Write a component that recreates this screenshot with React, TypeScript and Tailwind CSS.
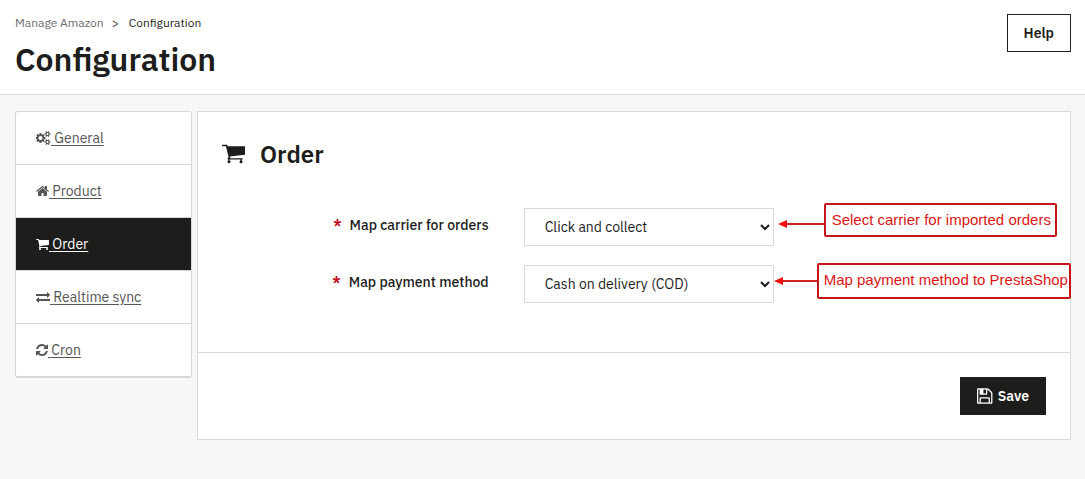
import { useState } from 'react'

type IconName = 'cogs' | 'home' | 'cart' | 'exchange' | 'refresh' | 'floppy'

const icons: Record<IconName, { viewBox: string; d: string }> = {
  cogs: {
    viewBox: '0 0 1920 1792',
    d: 'M832 896q0-106-75-181t-181-75-181 75-75 181 75 181 181 75 181-75 75-181zm768 512q0-52-38-90t-90-38-90 38-38 90q0 53 37.5 90.5t90.5 37.5 90.5-37.5 37.5-90.5zm0-1024q0-52-38-90t-90-38-90 38-38 90q0 53 37.5 90.5t90.5 37.5 90.5-37.5 37.5-90.5zm-384 421v185q0 10-7 19.5t-16 10.5l-155 24q-11 35-32 76 34 48 90 115 7 11 7 20 0 12-7 19-23 30-82.5 89.5t-78.5 59.5q-11 0-21-7l-115-90q-37 19-77 31-11 108-23 155-7 24-30 24h-186q-11 0-20-7.5t-10-17.5l-23-153q-34-10-75-31l-118 89q-7 7-20 7-11 0-21-8-144-133-144-160 0-9 7-19 10-14 41-53t47-61q-23-44-35-82l-152-24q-10-1-17-9.5t-7-19.5v-185q0-10 7-19.5t16-10.5l155-24q11-35 32-76-34-48-90-115-7-11-7-20 0-12 7-20 22-30 82-89t79-59q11 0 21 7l115 90q34-18 77-32 11-108 23-154 7-24 30-24h186q11 0 20 7.5t10 17.5l23 153q34 10 75 31l118-89q8-7 20-7 11 0 21 8 144 133 144 160 0 8-7 19-12 16-42 54t-45 60q23 48 34 82l152 23q10 2 17 10.5t7 19.5zm640 533v140q0 16-149 31-12 27-30 52 51 113 51 138 0 4-4 7-122 71-124 71-8 0-46-47t-52-68q-20 2-30 2t-30-2q-14 21-52 68t-46 47q-2 0-124-71-4-3-4-7 0-25 51-138-18-25-30-52-149-15-149-31v-140q0-16 149-31 13-29 30-52-51-113-51-138 0-4 4-7 4-2 35-20t59-34 30-16q8 0 46 46.5t52 67.5q20-2 30-2t30 2q51-71 92-112l6-2q4 0 124 70 4 3 4 7 0 25-51 138 17 23 30 52 149 15 149 31zm0-1024v140q0 16-149 31-12 27-30 52 51 113 51 138 0 4-4 7-122 71-124 71-8 0-46-47t-52-68q-20 2-30 2t-30-2q-14 21-52 68t-46 47q-2 0-124-71-4-3-4-7 0-25 51-138-18-25-30-52-149-15-149-31v-140q0-16 149-31 13-29 30-52-51-113-51-138 0-4 4-7 4-2 35-20t59-34 30-16q8 0 46 46.5t52 67.5q20-2 30-2t30 2q51-71 92-112l6-2q4 0 124 70 4 3 4 7 0 25-51 138 17 23 30 52 149 15 149 31z',
  },
  home: {
    viewBox: '64 0 1664 1792',
    d: 'M1472 992v480q0 26-19 45t-45 19h-384v-384h-256v384h-384q-26 0-45-19t-19-45v-480q0-1 .5-3t.5-3l575-474 575 474q1 2 1 6zm223-69l-62 74q-8 9-21 11h-3q-13 0-21-7l-692-577-692 577q-12 8-24 7-13-2-21-11l-62-74q-8-10-7-23.5t11-21.5l719-599q32-26 76-26t76 26l244 204v-195q0-14 9-23t23-9h192q14 0 23 9t9 23v408l219 182q10 8 11 21.5t-7 23.5z',
  },
  cart: {
    viewBox: '64 0 1664 1792',
    d: 'M704 1536q0 52-38 90t-90 38-90-38-38-90 38-90 90-38 90 38 38 90zm896 0q0 52-38 90t-90 38-90-38-38-90 38-90 90-38 90 38 38 90zm128-1088v512q0 24-16.5 42.5t-40.5 21.5l-1044 122q13 60 13 70 0 16-24 64h920q26 0 45 19t19 45-19 45-45 19h-1024q-26 0-45-19t-19-45q0-11 8-31.5t16-36 21.5-40 15.5-29.5l-177-823h-204q-26 0-45-19t-19-45 19-45 45-19h256q16 0 28.5 6.5t19.5 15.5 13 24.5 8 26 5.5 29.5 4.5 26h1201q26 0 45 19t19 45z',
  },
  exchange: {
    viewBox: '0 0 1792 1792',
    d: 'M1792 1184v192q0 13-9.5 22.5t-22.5 9.5h-1376v192q0 13-9.5 22.5t-22.5 9.5q-12 0-24-10l-319-320q-9-9-9-22 0-14 9-23l320-320q9-9 23-9 13 0 22.5 9.5t9.5 22.5v192h1376q13 0 22.5 9.5t9.5 22.5zm0-544q0 14-9 23l-320 320q-9 9-23 9-13 0-22.5-9.5t-9.5-22.5v-192h-1376q-13 0-22.5-9.5t-9.5-22.5v-192q0-13 9.5-22.5t22.5-9.5h1376v-192q0-14 9-23t23-9q12 0 24 10l319 319q9 9 9 23z',
  },
  refresh: {
    viewBox: '128 0 1536 1792',
    d: 'M1639 1056q0 5-1 7-64 268-268 434.5t-478 166.5q-146 0-282.5-55t-243.5-157l-129 129q-19 19-45 19t-45-19-19-45v-448q0-26 19-45t45-19h448q26 0 45 19t19 45-19 45l-137 137q71 66 161 102t187 36q134 0 250-65t186-179q11-17 53-117 8-23 30-23h192q13 0 22.5 9.5t9.5 22.5zm25-800v448q0 26-19 45t-45 19h-448q-26 0-45-19t-19-45 19-45l138-138q-148-137-349-137-134 0-250 65t-186 179q-11 17-53 117-8 23-30 23h-199q-13 0-22.5-9.5t-9.5-22.5v-7q65-268 270-434.5t480-166.5q146 0 284 55.5t245 156.5l130-129q19-19 45-19t45 19 19 45z',
  },
  floppy: {
    viewBox: '128 0 1536 1792',
    d: 'M512 1536h768v-384h-768v384zm896 0h128v-896q0-14-10-38.5t-20-34.5l-281-281q-10-10-34-20t-39-10v416q0 40-28 68t-68 28h-576q-40 0-68-28t-28-68v-416h-128v1280h128v-416q0-40 28-68t68-28h832q40 0 68 28t28 68v416zm-384-928v-320q0-13-9.5-22.5t-22.5-9.5h-192q-13 0-22.5 9.5t-9.5 22.5v320q0 13 9.5 22.5t22.5 9.5h192q13 0 22.5-9.5t9.5-22.5zm640 32v928q0 40-28 68t-68 28h-1344q-40 0-68-28t-28-68v-1344q0-40 28-68t68-28h928q40 0 88 20t76 48l280 280q28 28 48 76t20 88z',
  },
}

function Icon({ name, className }: { name: IconName; className: string }) {
  return (
    <svg viewBox={icons[name].viewBox} className={className} fill="currentColor" aria-hidden="true">
      <path d={icons[name].d} />
    </svg>
  )
}

const tabs: { id: string; label: string; icon: IconName }[] = [
  { id: 'general', label: 'General', icon: 'cogs' },
  { id: 'product', label: 'Product', icon: 'home' },
  { id: 'order', label: 'Order', icon: 'cart' },
  { id: 'sync', label: 'Realtime sync', icon: 'exchange' },
  { id: 'cron', label: 'Cron', icon: 'refresh' },
]

function HeadingCart() {
  return (
    <svg viewBox="0 0 23 20" className="h-5 w-[23px]" fill="currentColor" aria-hidden="true">
      <path d="M0 .8h5.2l.5 1.4H23v8.6L8 12.6l.4 1.7h12.2v1.3H5.6v-1.2l1-1.4L3.9 2.2H0z" />
      <circle cx="7" cy="17.8" r="1.5" />
      <circle cx="19" cy="17.8" r="1.5" />
      <path d="M6.4 15h1.2v2H6.4zM18.4 15h1.2v2h-1.2z" />
    </svg>
  )
}

function Arrow({ className }: { className: string }) {
  return (
    <svg viewBox="0 0 46 8" preserveAspectRatio="xMinYMid slice" className={className} aria-hidden="true">
      <path d="M7 4H46" stroke="#c9241f" strokeWidth="2" />
      <path d="M0 4L9 0V8Z" fill="#f50f0f" />
    </svg>
  )
}

export default function App() {
  const [active, setActive] = useState('order')
  const [carrier, setCarrier] = useState('click')
  const [payment, setPayment] = useState('cod')

  return (
    <div className="min-h-screen bg-[#f7f7f7] font-['IBM_Plex_Sans','Roboto',sans-serif] text-sm text-[#1d1d1b]">
      {/* Page header */}
      <header className="flex items-start justify-between border-b border-[#dadcdc] bg-white pt-[14px] pr-[14px] pb-[15px] pl-[15px]">
        <div>
          <nav aria-label="Breadcrumb" className="flex text-xs leading-[18px]">
            <a href="#" className="text-[#6c6c6c]">Manage Amazon</a>
            <span className="px-2">&gt;</span>
            <span className="pl-[2px]">Configuration</span>
          </nav>
          <h1 className="mt-[7px] text-[32px] leading-10 font-semibold">Configuration</h1>
        </div>
        <button type="button" className="h-[38px] border border-[#1d1d1b] bg-white px-4 font-semibold">
          Help
        </button>
      </header>

      <main className="flex items-start gap-[5px] pt-4 pr-[14px] pl-[15px]">
        {/* Tabs */}
        <nav className="w-[177px] shrink-0 overflow-hidden rounded-[3px] border border-b-2 border-[#d3d8db] bg-white">
          <ul className="divide-y divide-[#d3d8db]">
            {tabs.map((tab) => (
              <li key={tab.id}>
                <a
                  href={`#${tab.id}`}
                  onClick={() => setActive(tab.id)}
                  className={`block px-5 py-4 leading-5 underline underline-offset-2 ${
                    active === tab.id ? 'bg-[#1d1d1b] text-white' : 'text-[#555]'
                  }`}
                >
                  <Icon name={tab.icon} className="inline-block h-[14px] w-auto align-[-2px]" />
                  {' '}{tab.label}
                </a>
              </li>
            ))}
          </ul>
        </nav>

        {/* Settings panel */}
        <form className="min-w-0 flex-1 border border-[#dadcdc] bg-white" onSubmit={(e) => e.preventDefault()}>
          <h2 className="flex items-center gap-[15px] px-6 pt-6 text-2xl leading-9 font-semibold">
            <HeadingCart />
            Order
          </h2>

          <div className="space-y-[19px] pt-9 pb-[49px]">
            <div className="flex gap-[35px]">
              <label htmlFor="carrier" className="w-1/3 pt-[7px] text-right leading-5 font-medium">
                <span className="mr-2 font-bold text-[#c1121f]">*</span>
                Map carrier for orders
              </label>
              <div className="relative w-[250px]">
                <select
                  id="carrier"
                  value={carrier}
                  onChange={(e) => setCarrier(e.target.value)}
                  className="block h-[38px] w-full border border-[#dadcdc] bg-white px-4"
                >
                  <option value="click">Click and collect</option>
                  <option value="my">My carrier</option>
                </select>
                <div className="absolute bottom-[9px] left-full ml-1 flex items-center">
                  <Arrow className="mt-2 h-2 w-[46px]" />
                  <p className="h-[34px] rounded-[2px] border-2 border-[#c4161a] bg-white pr-1 pl-[6px] font-['Liberation_Sans',sans-serif] text-[15px] leading-[30px] whitespace-nowrap text-[#dc1414]">
                    Select carrier for imported orders
                  </p>
                </div>
              </div>
            </div>

            <div className="flex gap-[35px]">
              <label htmlFor="payment" className="w-1/3 pt-[7px] text-right leading-5 font-medium">
                <span className="mr-2 font-bold text-[#c1121f]">*</span>
                Map payment method
              </label>
              <div className="relative w-[250px]">
                <select
                  id="payment"
                  value={payment}
                  onChange={(e) => setPayment(e.target.value)}
                  className="block h-[38px] w-full border border-[#dadcdc] bg-white px-4"
                >
                  <option value="cod">Cash on delivery (COD)</option>
                  <option value="bank">Bank transfer</option>
                </select>
                <div className="absolute bottom-1 left-full flex items-center">
                  <Arrow className="h-2 w-[43px]" />
                  <p className="h-9 rounded-[2px] border-2 border-[#c4161a] bg-white pr-px pl-[5px] font-['Liberation_Sans',sans-serif] text-[15px] leading-[30px] whitespace-nowrap text-[#dc1414]">
                    Map payment method to PrestaShop
                  </p>
                </div>
              </div>
            </div>
          </div>

          <div className="flex justify-end border-t border-[#dadcdc] p-6">
            <button type="submit" className="flex h-[38px] items-center gap-[5px] bg-[#1d1d1b] px-[17px] font-semibold text-white">
              <Icon name="floppy" className="h-[18px] w-auto" />
              Save
            </button>
          </div>
        </form>
      </main>
    </div>
  )
}
